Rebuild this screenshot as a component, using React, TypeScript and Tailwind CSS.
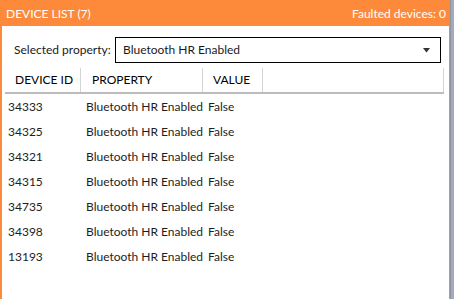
const devices = [
  { id: '34333', property: 'Bluetooth HR Enabled', value: 'False' },
  { id: '34325', property: 'Bluetooth HR Enabled', value: 'False' },
  { id: '34321', property: 'Bluetooth HR Enabled', value: 'False' },
  { id: '34315', property: 'Bluetooth HR Enabled', value: 'False' },
  { id: '34735', property: 'Bluetooth HR Enabled', value: 'False' },
  { id: '34398', property: 'Bluetooth HR Enabled', value: 'False' },
  { id: '13193', property: 'Bluetooth HR Enabled', value: 'False' },
];

const DeviceList = () => {
  return (
    <div className="flex w-[454px] h-[299px] bg-white text-[12px] leading-none font-['Lato',sans-serif]">
      <div className="flex flex-col w-[450px] h-full border-l-2 border-r border-[#fd8a3a]">
        <div className="flex items-center justify-between h-[26px] pt-[2px] bg-[#fd8a3a] text-white pl-[4px] pr-[3px]">
          <span>DEVICE LIST (7)</span>
          <span>Faulted devices: 0</span>
        </div>

        <div className="flex items-center mt-[11px] pl-[12px] text-[#1a1a1a]">
          <span className="w-[101px] whitespace-nowrap">Selected property:</span>
          <div className="flex items-center justify-between w-[326px] h-[26px] border border-black pl-[7px] pr-[9px]">
            <span>Bluetooth HR Enabled</span>
            <svg width="8" height="5" viewBox="0 0 8 5">
              <path d="M0 0h7L3.5 4.5z" fill="#333" />
            </svg>
          </div>
        </div>

        <div className="flex mt-[5px] ml-[3px] w-[439px] h-[26px] border-b-[2px] border-[#bcbcbc] text-black">
          <div className="flex items-center w-[76px] pl-[10px] border-r border-[#d4d4d4]">DEVICE ID</div>
          <div className="flex items-center w-[122px] pl-[11px] border-r border-[#d4d4d4]">PROPERTY</div>
          <div className="flex items-center w-[60px] pl-[10px] border-r border-[#d4d4d4]">VALUE</div>
          <div className="flex-1 border-r border-[#d4d4d4]" />
        </div>

        <div className="flex flex-col ml-[3px] text-[#1e1e1e]">
          {devices.map((d) => (
            <div key={d.id} className="flex items-center h-[25px] pt-[1px]">
              <span className="w-[76px] pl-[3px]">{d.id}</span>
              <span className="w-[122px] pl-[5px] whitespace-nowrap">{d.property}</span>
              <span className="pl-[5px]">{d.value}</span>
            </div>
          ))}
        </div>
      </div>
      <div className="flex-1 h-full bg-[#a3aaba] border-l border-[#8c93a3]" />
    </div>
  );
};

export default function App() {
  return <DeviceList />;
}
